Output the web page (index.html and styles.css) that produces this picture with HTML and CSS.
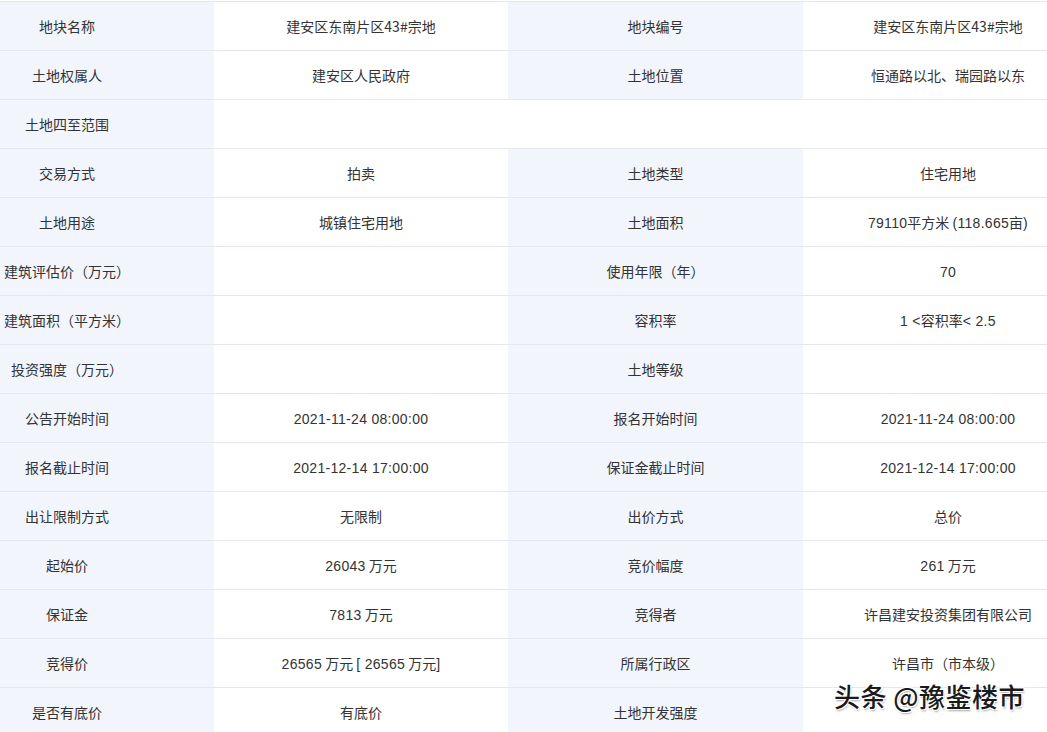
FILE: index.html
```html
<!DOCTYPE html>
<html lang="zh">
<head>
<meta charset="utf-8">
<title>地块信息</title>
<link rel="stylesheet" href="styles.css">
</head>
<body>
<div class="page">
  <table class="info">
    <colgroup>
      <col class="c1"><col class="c2"><col class="c3"><col class="c4">
    </colgroup>
    <tbody>
      <tr><th>地块名称</th><td>建安区东南片区43#宗地</td><th>地块编号</th><td>建安区东南片区43#宗地</td></tr>
      <tr><th>土地权属人</th><td>建安区人民政府</td><th>土地位置</th><td>恒通路以北、瑞园路以东</td></tr>
      <tr><th>土地四至范围</th><td colspan="3"></td></tr>
      <tr><th>交易方式</th><td>拍卖</td><th>土地类型</th><td>住宅用地</td></tr>
      <tr><th>土地用途</th><td>城镇住宅用地</td><th>土地面积</th><td><span class="num">79110</span>平方米 <span class="num">(118.665</span>亩<span class="num">)</span></td></tr>
      <tr><th>建筑评估价（万元）</th><td></td><th>使用年限（年）</th><td><span class="num">70</span></td></tr>
      <tr><th>建筑面积（平方米）</th><td></td><th>容积率</th><td><span class="num">1 &lt;</span>容积率<span class="num">&lt; 2.5</span></td></tr>
      <tr><th>投资强度（万元）</th><td></td><th>土地等级</th><td></td></tr>
      <tr><th>公告开始时间</th><td><span class="num">2021-11-24 08:00:00</span></td><th>报名开始时间</th><td><span class="num">2021-11-24 08:00:00</span></td></tr>
      <tr><th>报名截止时间</th><td><span class="num">2021-12-14 17:00:00</span></td><th>保证金截止时间</th><td><span class="num">2021-12-14 17:00:00</span></td></tr>
      <tr><th>出让限制方式</th><td>无限制</td><th>出价方式</th><td>总价</td></tr>
      <tr><th>起始价</th><td><span class="num">26043</span> 万元</td><th>竞价幅度</th><td><span class="num">261</span> 万元</td></tr>
      <tr><th>保证金</th><td><span class="num">7813</span> 万元</td><th>竞得者</th><td>许昌建安投资集团有限公司</td></tr>
      <tr><th>竞得价</th><td><span class="num">26565</span> 万元 <span class="num">[ 26565</span> 万元<span class="num">]</span></td><th>所属行政区</th><td>许昌市（市本级）</td></tr>
      <tr><th>是否有底价</th><td>有底价</td><th>土地开发强度</th><td></td></tr>
    </tbody>
  </table>
  <div class="watermark">头条 @豫鉴楼市</div>
</div>
</body>
</html>
```

FILE: styles.css
```css
html, body {
  margin: 0;
  padding: 0;
  background: #ffffff;
}
body {
  width: 1047px;
  height: 732px;
  overflow: hidden;
  font-family: "Noto Sans CJK SC", "Liberation Sans", sans-serif;
}
.page {
  position: relative;
  width: 1047px;
  height: 732px;
  overflow: hidden;
  padding-top: 1px;
  box-sizing: border-box;
}
.info {
  border-collapse: collapse;
  table-layout: fixed;
  width: 1173px;
  margin-left: -80px;
  font-size: 14px;
  color: #333333;
}
.c1 { width: 294px; }
.c2 { width: 294px; }
.c3 { width: 295px; }
.c4 { width: 290px; }
.info tr {
  height: 49px;
}
.info th, .info td {
  border-top: 1px solid #e4e7ed;
  border-bottom: 1px solid #e4e7ed;
  padding: 0 4px;
  text-align: center;
  vertical-align: middle;
  font-weight: normal;
  line-height: 20px;
  white-space: nowrap;
}
.info th {
  background: #f2f5fc;
}
.info td {
  background: #ffffff;
}
.num {
  font-family: "Liberation Sans", sans-serif;
  font-size: 14px;
  letter-spacing: 0.3px;
}
.watermark {
  position: absolute;
  left: 834px;
  top: 676px;
  font-size: 26px;
  line-height: 40px;
  font-weight: 500;
  color: #1a1a1a;
  letter-spacing: 0.5px;
  text-shadow: 1px 1px 0 #ffffff, -1px -1px 0 #ffffff, 1px -1px 0 #ffffff, -1px 1px 0 #ffffff, 1px 2px 2px rgba(0,0,0,0.35);
}
```
